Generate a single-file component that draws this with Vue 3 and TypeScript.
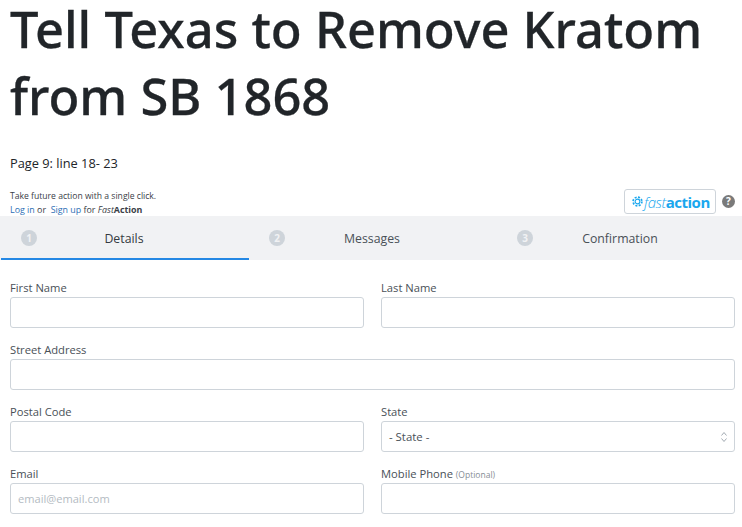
<script setup lang="ts">
const steps = [
  { n: 1, label: 'Details', active: true },
  { n: 2, label: 'Messages', active: false },
  { n: 3, label: 'Confirmation', active: false },
]
</script>

<template>
  <div class="page">
    <h1 class="title"><span>Tell Texas to Remove Kratom</span><span>from SB 1868</span></h1>
    <p class="intro">Page 9: line 18- 23</p>
    <div class="fa-row">
      <div class="fa-text">
        <div>Take future action with a single click.</div>
        <div class="fa-login"><a class="link">Log in</a> or&nbsp; <a class="link">Sign up</a> for <em>Fast</em><b>Action</b></div>
      </div>
      <div class="fa-right">
        <div class="fa-badge">
          <svg class="fa-gear" width="11" height="11" viewBox="0 0 12 12" fill="none" stroke="#1aa7ee">
            <circle cx="6" cy="6" r="2.6" stroke-width="1.2" />
            <circle cx="6" cy="6" r="4.8" stroke-width="1.8" stroke-dasharray="2.2 1.57" />
          </svg>
          <span class="fa-fast">fast</span><span class="fa-action">action</span>
        </div>
        <span class="help">?</span>
      </div>
    </div>
    <div class="tabs">
      <div v-for="s in steps" :key="s.n" class="tab" :class="{ active: s.active }">
        <span class="num">{{ s.n }}</span>
        <span class="tab-label">{{ s.label }}</span>
      </div>
    </div>
    <form class="form">
      <div class="field"><label>First Name</label><input type="text" /></div>
      <div class="field"><label>Last Name</label><input type="text" /></div>
      <div class="field wide"><label>Street Address</label><input type="text" /></div>
      <div class="field"><label>Postal Code</label><input type="text" /></div>
      <div class="field">
        <label>State</label>
        <div class="select">
          <span>- State -</span>
          <svg width="8" height="12" viewBox="0 0 8 12" fill="none" stroke="#a3abb3" stroke-width="1">
            <path d="M1.5 4.5 4 1.5 6.5 4.5M1.5 7.5 4 10.5 6.5 7.5" />
          </svg>
        </div>
      </div>
      <div class="field"><label>Email</label><input type="text" placeholder="email@email.com" /></div>
      <div class="field"><label>Mobile Phone <small>(Optional)</small></label><input type="text" /></div>
    </form>
  </div>
</template>

<style>
html, body { margin: 0; overflow: hidden; background: #fff; }
</style>

<style scoped>
.page {
  width: 742px;
  height: 527px;
  overflow: hidden;
  font-family: "Open Sans", "Noto Sans", sans-serif;
  color: #212529;
  box-sizing: border-box;
}
.title {
  display: flex;
  flex-direction: column;
  gap: 10px;
  margin: 0 0 5px;
  padding: 0 10px;
  font-family: "Noto Sans", sans-serif;
  font-size: 50.6px;
  line-height: 57px;
  font-weight: 500;
  color: #212529;
  -webkit-text-stroke: 0.3px #212529;
}
.title span { white-space: nowrap; }
.intro {
  margin: 0;
  padding: 24px 10px 0;
  font-size: 12.8px;
  line-height: 20px;
}
.fa-row {
  display: flex;
  justify-content: space-between;
  align-items: flex-end;
  height: 34px;
  padding: 9px 7px 0 10px;
}
.fa-text {
  font-size: 8.6px;
  line-height: 13px;
  color: #3a4047;
}
.fa-login { font-size: 8.9px; }
.link { color: #2e6fb5; }
.fa-right { display: flex; align-items: center; gap: 6px; padding-bottom: 2px; }
.fa-badge {
  display: flex;
  align-items: center;
  box-sizing: border-box;
  width: 92px;
  height: 25px;
  border: 1px solid #ced4da;
  border-radius: 3px;
  padding-left: 7px;
  color: #1aa7ee;
  font-family: "Open Sans", sans-serif;
  font-size: 15px;
  letter-spacing: -0.5px;
}
.fa-gear { margin-right: 1px; }
.fa-fast { font-style: italic; font-weight: 300; }
.fa-action { font-weight: 700; }
.help {
  width: 13px;
  height: 13px;
  border-radius: 50%;
  background: #7a7a7a;
  color: #fff;
  font-size: 10px;
  font-weight: 700;
  line-height: 13px;
  text-align: center;
}
.tabs {
  display: flex;
  height: 44px;
  background: #f1f2f4;
}
.tab {
  flex: 0 0 248px;
  box-sizing: border-box;
  display: flex;
  align-items: center;
  justify-content: center;
  position: relative;
  padding-right: 2px;
  font-size: 12.3px;
  color: #495057;
}
.tab:first-child { margin-left: 1px; }
.tab.active { border-bottom: 2px solid #2488e4; color: #343a40; padding-top: 2px; }
.num {
  position: absolute;
  left: 20px;
  top: 14px;
  width: 16px;
  height: 16px;
  border-radius: 50%;
  background: #ced4da;
  color: #f1f2f4;
  font-size: 10px;
  font-weight: 700;
  line-height: 16px;
  text-align: center;
}
.form {
  display: grid;
  grid-template-columns: 354px 354px;
  column-gap: 17px;
  row-gap: 14px;
  padding: 20px 10px 0;
}
.field { display: flex; flex-direction: column; min-width: 0; }
.wide { grid-column: 1 / -1; }
label {
  font-size: 11.2px;
  line-height: 15px;
  height: 17px;
  color: #495057;
}
label small { font-size: 8.5px; color: #868e96; }
input, .select {
  box-sizing: border-box;
  width: 100%;
  height: 31px;
  border: 1px solid #ced4da;
  border-radius: 3px;
  background: #fff;
  padding: 0 7px;
  font-family: inherit;
  font-size: 11.1px;
  color: #495057;
  outline: none;
}
input::placeholder { color: #b4bbc2; opacity: 1; }
.select {
  display: flex;
  align-items: center;
  justify-content: space-between;
  padding-right: 6px;
  font-size: 11.4px;
}
</style>
